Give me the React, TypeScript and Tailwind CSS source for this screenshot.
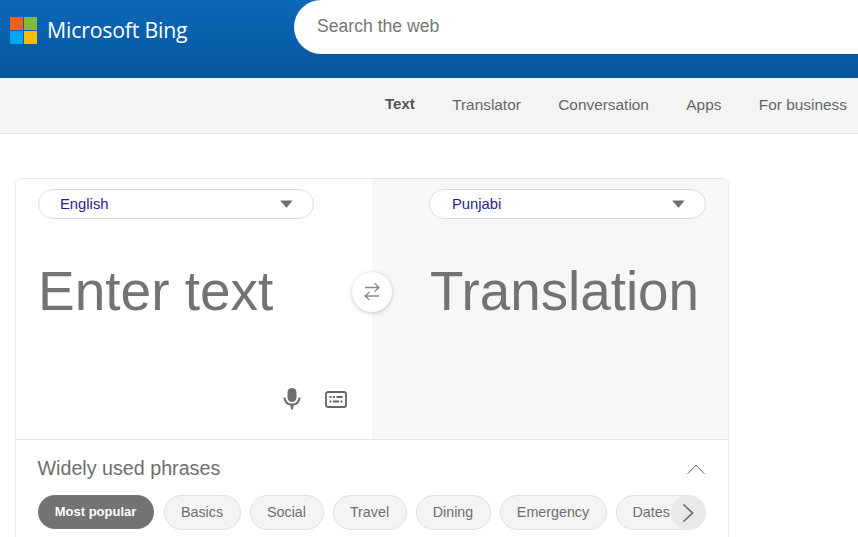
import React from "react";

const chips = [
  { t: "Basics", w: "w-[77px]" },
  { t: "Social", w: "w-[74px]" },
  { t: "Travel", w: "w-[74px]" },
  { t: "Dining", w: "w-[75px]" },
  { t: "Emergency", w: "w-[107px]" },
];

function LangSelect({ label, widthClass, padClass }: { label: string; widthClass: string; padClass: string }) {
  return (
    <div className={`${widthClass} ${padClass} h-[30px] rounded-full border border-[#dcdcdc] bg-white flex items-center justify-between pr-[20px] text-[14.8px] text-[#2b1e86]`}>
      <span>{label}</span>
      <svg width="13" height="8" viewBox="0 0 13 8"><path d="M0.5 1 Q0.5 0.5 1 0.5 H12 Q12.5 0.5 12.2 1 L7 7.2 Q6.5 7.8 6 7.2 L0.8 1.2 Z" fill="#6e6e6e" /></svg>
    </div>
  );
}

export default function App() {
  return (
    <div className="w-[858px] h-[537px] overflow-hidden bg-white font-['Liberation_Sans',Arial,sans-serif]">
      <header className="h-[78px] bg-gradient-to-b from-[#0b68b8] to-[#07569d] flex items-start">
        <div className="w-[294px] shrink-0 flex items-center pl-[10px] pt-[17px]">
          <svg width="27" height="27" viewBox="0 0 27 27" className="shrink-0">
            <rect x="0" y="0" width="13" height="13" fill="#f25f22" />
            <rect x="14" y="0" width="13" height="13" fill="#7fba3c" />
            <rect x="0" y="14" width="13" height="13" fill="#05a6f0" />
            <rect x="14" y="14" width="13" height="13" fill="#ffba08" />
          </svg>
          <span className="ml-[10px] mb-[2px] text-[21.3px] leading-[25px] text-white font-['Open_Sans',sans-serif] tracking-[-0.2px]">Microsoft Bing</span>
        </div>
        <div className="flex-1 h-[54px] bg-white rounded-l-[27px] flex items-center pl-[23px] pb-[2px] text-[17.6px] text-[#767676]">Search the web</div>
      </header>

      <nav className="h-[56px] bg-[#f4f4f4] border-b border-[#e2e2e2] flex items-center pl-[385px] gap-[37.4px] pb-[2px] text-[15.4px] text-[#666666] whitespace-nowrap">
        <span className="font-bold text-[15px] text-[#555555]">Text</span>
        <span>Translator</span>
        <span>Conversation</span>
        <span>Apps</span>
        <span>For business</span>
      </nav>

      <main className="ml-[15px] mt-[44px] w-[714px] h-[400px] rounded-t-[6px] border border-[#e9e9e9] relative">
        <div className="h-[261px] flex border-b border-[#e4e4e4]">
          <section className="w-[356px] pt-[10px] pl-[22px] flex flex-col">
            <LangSelect label="English" widthClass="w-[276px]" padClass="pl-[21px]" />
            <div className="mt-[37px] text-[55px] leading-[70px] text-[#737373]">Enter text</div>
            <div className="mt-[59px] flex items-center pl-[242px] gap-[21px]">
              <svg width="24" height="28" viewBox="0 0 24 28">
                <rect x="7.500" y="3" width="9" height="14" rx="4.500" fill="#707070" />
                <path d="M4.500 12.500 C5 18 9 19.500 12 19.500 C15 19.500 19 18 19.500 12.500" fill="none" stroke="#707070" strokeWidth="2.200" />
                <path d="M10.200 20 h3.600 l-1 4.500 h-1.600 Z" fill="#707070" />
              </svg>
              <svg width="22" height="17" viewBox="0 0 22 17">
                <rect x="1" y="1" width="20" height="15" rx="2" fill="none" stroke="#636363" strokeWidth="1.800" />
                <path d="M4.500 6 h2 M8 6 h2 M11.500 6 h6 M4.500 10.500 h2 M8 10.500 h6 M15.500 10.500 h2" stroke="#636363" strokeWidth="1.800" />
              </svg>
            </div>
          </section>
          <section className="flex-1 bg-[#f7f7f7] pt-[10px] pl-[57px] flex flex-col rounded-tr-[6px]">
            <LangSelect label="Punjabi" widthClass="w-[277px]" padClass="pl-[22px]" />
            <div className="mt-[37px] ml-[1px] text-[54.8px] leading-[70px] text-[#737373] whitespace-nowrap">Translation</div>
          </section>
        </div>

        <button className="absolute left-[336px] top-[93px] w-[40px] h-[40px] rounded-full bg-white shadow-[0_1px_4px_rgba(0,0,0,0.22)] flex items-center justify-center">
          <svg width="18" height="18" viewBox="0 0 18 18" fill="none" stroke="#8a8a8a" strokeWidth="1.400">
            <path d="M2 6 H16 M11.500 1.800 L16 6 L11.500 10" strokeWidth="1.300" transform="translate(0 -1.500)" />
            <path d="M16 12 H2 M6.500 8 L2 12 L6.500 16" strokeWidth="1.300" transform="translate(0 1)" />
          </svg>
        </button>

        <div className="pl-[21.5px] pr-[22px] pt-[16px]">
          <div className="flex items-center justify-between h-[26px]">
            <span className="text-[19.7px] text-[#6e6e6e]">Widely used phrases</span>
            <svg width="20" height="12" viewBox="0 0 20 12" fill="none" stroke="#6e6e6e" strokeWidth="1">
              <path d="M1.500 11 L10 2 L18.500 11" />
            </svg>
          </div>
          <div className="mt-[13px] flex gap-[9px] text-[14.3px] relative">
            <span className="w-[116px] h-[34px] mr-[1px] rounded-full bg-[#737373] text-white font-bold text-[13px] flex items-center justify-center shrink-0">Most popular</span>
            {chips.map((c) => (
              <span key={c.t} className={`${c.w} h-[35px] rounded-full bg-[#f4f4f4] border border-[#e2e2e2] text-[#6e6e6e] flex items-center justify-center shrink-0`}>{c.t}</span>
            ))}
            <span className="w-[90px] h-[35px] rounded-full bg-[#f4f4f4] border border-[#e2e2e2] text-[#6e6e6e] flex items-center pl-[16px] shrink-0">Dates</span>
            <span className="absolute left-[633px] top-0 w-[35px] h-[35px] rounded-full bg-[#e9e9e9] flex items-center justify-center">
              <svg width="12" height="20" viewBox="0 0 12 20" fill="none" stroke="#666666" strokeWidth="1.600"><path d="M1.500 1.500 L10.500 10 L1.500 18.500" /></svg>
            </span>
          </div>
        </div>
      </main>
    </div>
  );
}
